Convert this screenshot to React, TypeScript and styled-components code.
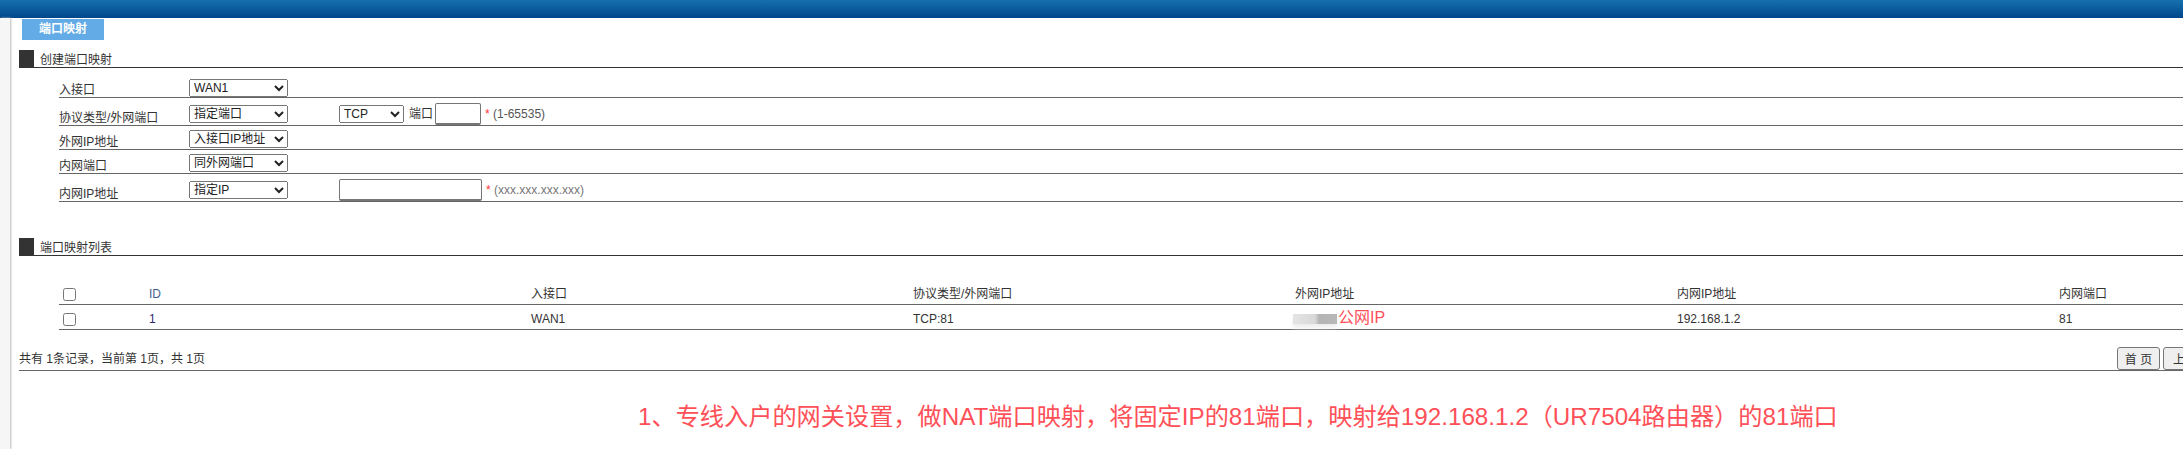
import styled, { createGlobalStyle } from 'styled-components';

const GlobalStyle = createGlobalStyle`
  html, body {
    margin: 0;
    padding: 0;
    background: #fff;
  }

  body {
    font-family: "Liberation Sans", "Noto Sans CJK SC", sans-serif;
    font-size: 12px;
    color: #333;
  }
`;

const Page = styled.div`
  width: 2183px;
  height: 449px;
  overflow: hidden;
`;

const TopBar = styled.div`
  height: 18px;
  background: linear-gradient(#1770ae, #00478a);
`;

const Body = styled.div`
  display: flex;
  height: 431px;
`;

const SideStrip = styled.div`
  flex: 0 0 10px;
  background: #f6f6f6;
  box-shadow: 1px 0 2px #bbb;
`;

const Content = styled.div`
  flex: 1;
  min-width: 0;
  overflow: hidden;
  padding: 1px 0 0 9px;
`;

const Tab = styled.div`
  width: 82px;
  height: 21px;
  margin-left: 3px;
  background: #62abe6;
  color: #fff;
  font-weight: bold;
  line-height: 21px;
  text-align: center;
`;

const SectionTitle = styled.div<{ $top: number }>`
  display: flex;
  align-items: flex-end;
  height: 17px;
  margin-top: ${p => p.$top}px;
  border-bottom: 1px solid #333;
  line-height: 14px;
`;

const SectionMark = styled.span`
  width: 15px;
  height: 17px;
  margin-right: 6px;
  background: #333;
`;

const FormRows = styled.div`
  margin-left: 40px;
`;

const Row = styled.div<{ $height: number }>`
  display: flex;
  align-items: flex-end;
  box-sizing: border-box;
  height: ${p => p.$height}px;
  border-bottom: 1px solid #666;
`;

const Label = styled.label`
  flex: 0 0 130px;
  line-height: 14px;
`;

const Select = styled.select<{ $width?: number; $lift: number }>`
  box-sizing: border-box;
  width: ${p => p.$width ?? 99}px;
  height: 18px;
  margin: 0 0 ${p => p.$lift}px;
  padding: 0;
  font: 12px "Liberation Sans", "Noto Sans CJK SC", sans-serif;
  color: #222;
`;

const Extra = styled.div`
  display: flex;
  align-items: flex-end;
  margin-left: 51px;
`;

const Unit = styled.span`
  margin: 0 2px 3px 5px;
  line-height: 16px;
`;

const TextInput = styled.input<{ $width: number }>`
  box-sizing: border-box;
  width: ${p => p.$width}px;
  height: 22px;
  margin: 0;
  padding: 0 2px;
  border: 1px solid #767676;
  border-bottom-width: 2px;
  border-radius: 2px;
`;

const Hint = styled.span<{ $muted?: boolean }>`
  margin: 0 0 3px 4px;
  line-height: 16px;
  color: ${p => (p.$muted ? '#777' : '#555')};

  em {
    color: #f33;
    font-style: normal;
  }
`;

const Table = styled.table`
  width: 2382px;
  margin: 24px 0 0 40px;
  border-collapse: collapse;
  table-layout: fixed;

  th, td {
    height: 20px;
    padding: 4px 0 0;
    border-bottom: 1px solid #666;
    font-weight: normal;
    line-height: 14px;
    text-align: left;
  }

  th:first-child, td:first-child {
    width: 90px;
    padding-left: 4px;
    box-sizing: border-box;
  }
`;

const Checkbox = styled.input`
  display: block;
  width: 13px;
  height: 13px;
  margin: 0;
`;

const IdHead = styled.span`
  color: #3f5f94;
`;

const IdValue = styled.span`
  color: #35276e;
`;

const PublicIp = styled.span`
  display: inline-flex;
  align-items: center;
  height: 14px;
  margin-left: -2px;
  color: #ff5058;
  font-size: 16px;
  line-height: 14px;
`;

const BlurredIp = styled.span`
  width: 44px;
  height: 10px;
  margin: 3px 1px 0 0;
  background: linear-gradient(90deg, #e4e4e4, #d8d8d8 50%, #b4b4b4 60%, #b8b8b8);
  box-shadow: 0 4px 4px #eee;
`;

const Pager = styled.div`
  display: grid;
  grid-template-columns: 2098px auto;
  align-items: end;
  box-sizing: border-box;
  height: 41px;
  border-bottom: 1px solid #666;
  line-height: 16px;
`;

const PagerText = styled.span`
  margin-bottom: 3px;
`;

const PagerButtons = styled.div`
  display: flex;
  gap: 3px;
`;

const PagerButton = styled.button<{ $width: number }>`
  flex: none;
  box-sizing: border-box;
  width: ${p => p.$width}px;
  height: 23px;
  padding: 0;
  border: 1px solid #767676;
  border-radius: 3px;
  background: #efefef;
  font: 12px "Liberation Sans", "Noto Sans CJK SC", sans-serif;
  color: #333;
`;

const Note = styled.div`
  margin: 30px 0 0 619px;
  color: #ff5058;
  font-size: 24.2px;
  line-height: 32px;
  white-space: nowrap;
`;

const columns = ['入接口', '协议类型/外网端口', '外网IP地址', '内网IP地址', '内网端口'];

const App = () => (
  <Page>
    <GlobalStyle />
    <TopBar />
    <Body>
      <SideStrip />
      <Content>
        <Tab>端口映射</Tab>

        <SectionTitle $top={10}>
          <SectionMark />
          创建端口映射
        </SectionTitle>

        <FormRows>
          <Row $height={30}>
            <Label>入接口</Label>
            <Select $lift={0}><option>WAN1</option></Select>
          </Row>
          <Row $height={28}>
            <Label>协议类型/外网端口</Label>
            <Select $lift={2}><option>指定端口</option></Select>
            <Extra>
              <Select $width={65} $lift={2}><option>TCP</option></Select>
              <Unit>端口</Unit>
              <TextInput $width={46} type='text' />
              <Hint><em>*</em> (1-65535)</Hint>
            </Extra>
          </Row>
          <Row $height={24}>
            <Label>外网IP地址</Label>
            <Select $lift={1}><option>入接口IP地址</option></Select>
          </Row>
          <Row $height={24}>
            <Label>内网端口</Label>
            <Select $lift={1}><option>同外网端口</option></Select>
          </Row>
          <Row $height={28}>
            <Label>内网IP地址</Label>
            <Select $lift={2}><option>指定IP</option></Select>
            <Extra>
              <TextInput $width={143} type='text' />
              <Hint $muted><em>*</em> (xxx.xxx.xxx.xxx)</Hint>
            </Extra>
          </Row>
        </FormRows>

        <SectionTitle $top={36}>
          <SectionMark />
          端口映射列表
        </SectionTitle>

        <Table>
          <thead>
            <tr>
              <th><Checkbox type='checkbox' /></th>
              <th><IdHead>ID</IdHead></th>
              {columns.map(name => <th key={name}>{name}</th>)}
            </tr>
          </thead>
          <tbody>
            <tr>
              <td><Checkbox type='checkbox' /></td>
              <td><IdValue>1</IdValue></td>
              <td>WAN1</td>
              <td>TCP:81</td>
              <td><PublicIp><BlurredIp />公网IP</PublicIp></td>
              <td>192.168.1.2</td>
              <td>81</td>
            </tr>
          </tbody>
        </Table>

        <Pager>
          <PagerText>共有 1条记录，当前第 1页，共 1页</PagerText>
          <PagerButtons>
            <PagerButton $width={43}>首 页</PagerButton>
            <PagerButton $width={56}>上一页</PagerButton>
          </PagerButtons>
        </Pager>

        <Note>1、专线入户的网关设置，做NAT端口映射，将固定IP的81端口，映射给192.168.1.2（UR7504路由器）的81端口</Note>
      </Content>
    </Body>
  </Page>
);

export default App;
